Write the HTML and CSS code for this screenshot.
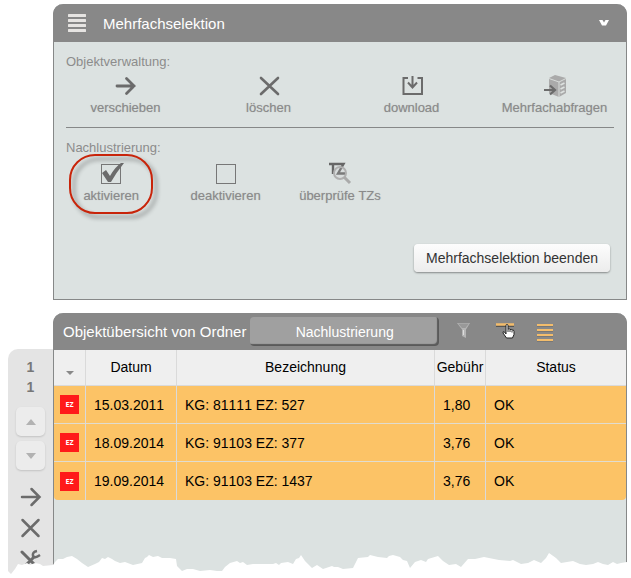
FILE: index.html
```html
<!DOCTYPE html>
<html lang="de">
<head>
<meta charset="utf-8">
<title>Mehrfachselektion</title>
<link rel="stylesheet" href="styles.css">
</head>
<body>
<main class="page">
  <section class="panel selection">
    <header class="panel-head">
      <svg class="menu-icon" width="18" height="20" viewBox="0 0 18 20" aria-hidden="true">
        <path d="M1 2.500H17M1 7.500H17M1 12.500H17M1 17.500H17" stroke="#e6e4e2" stroke-width="3" stroke-linecap="round"/>
      </svg>
      <h1 class="panel-title">Mehrfachselektion</h1>
      <button class="collapse" type="button" aria-label="Einklappen">
        <svg width="10" height="8" viewBox="0 0 10 8"><path d="M0 1H3.500L5 3.500L6.500 1H10L7 6.500H3Z" fill="#fff"/></svg>
      </button>
    </header>

    <h2 class="group-title">Objektverwaltung:</h2>
    <div class="actions actions-four">
      <button class="action" type="button">
        <svg width="24" height="24" viewBox="0 0 24 24"><path d="M4 12H21M13.500 4.500L21 12L13.500 19.500" fill="none" stroke="#6b6b6b" stroke-width="2.800" stroke-linecap="round"/></svg>
        <span>verschieben</span>
      </button>
      <button class="action" type="button">
        <svg width="24" height="24" viewBox="0 0 24 24"><path d="M4 4L21 20M21 4L4 20" stroke="#6b6b6b" stroke-width="2.600" stroke-linecap="round"/></svg>
        <span>löschen</span>
      </button>
      <button class="action" type="button">
        <svg width="24" height="24" viewBox="0 0 24 24"><path d="M8 4H3.500V20H22V4H17.500M12.500 2V13M8 8.500L12.500 13.500L17 8.500" fill="none" stroke="#6b6b6b" stroke-width="2"/></svg>
        <span>download</span>
      </button>
      <button class="action" type="button">
        <svg width="24" height="24" viewBox="0 0 24 24">
          <path d="M7 4L13 1L24 4V19L17 23L7 19Z" fill="#aaa"/>
          <path d="M7 4.500L17 8L24 4.500M17 8V23" fill="none" stroke="#d8dcda"/>
          <path d="M18.500 11L22.500 9M18.500 15L22.500 13M18.500 19L22.500 17" stroke="#dde2e0" stroke-width="1.600"/>
          <path d="M2 16H12M8 11.500L13 16L8 20.500" fill="none" stroke="#6b6b6b" stroke-width="2.200"/>
        </svg>
        <span>Mehrfachabfragen</span>
      </button>
    </div>

    <hr class="divider">

    <h2 class="group-title">Nachlustrierung:</h2>
    <div class="actions actions-five">
      <label class="action marked">
        <span class="tick">
          <input type="checkbox" checked>
          <svg class="tick-mark" width="24" height="24" viewBox="0 0 24 24" aria-hidden="true">
            <path d="M0 11L4 8L8 14Q13 5 19 1H22Q14 11 9 20H6Z" fill="#6b6b6b"/>
          </svg>
        </span>
        <span>aktivieren</span>
      </label>
      <label class="action">
        <span class="tick"><input type="checkbox"></span>
        <span>deaktivieren</span>
      </label>
      <button class="action" type="button">
        <svg width="24" height="24" viewBox="0 0 24 24">
          <path d="M1 2H9M5 2V12M9 2H15.500L10 11.500H17" fill="none" stroke="#666" stroke-width="2.400"/>
          <circle cx="12" cy="11" r="6" fill="#ccc" fill-opacity=".2" stroke="#b0b0b0" stroke-width="2"/>
          <path d="M16 15L22 21" stroke="#aaa" stroke-width="3"/>
        </svg>
        <span>überprüfe TZs</span>
      </button>
    </div>

    <footer class="panel-foot">
      <button class="finish" type="button">Mehrfachselektion beenden</button>
    </footer>
  </section>

  <div class="workspace">
    <aside class="rail">
      <span class="page-no">1</span>
      <span class="page-no">1</span>
      <button class="step" type="button" aria-label="Vorherige Seite"><svg width="10" height="6" viewBox="0 0 10 6"><path d="M0 6L5 0L10 6Z" fill="#b2b2b2"/></svg></button>
      <button class="step" type="button" aria-label="Nächste Seite"><svg width="10" height="6" viewBox="0 0 10 6"><path d="M0 0L5 6L10 0Z" fill="#b2b2b2"/></svg></button>
      <button class="tool tool-first" type="button" aria-label="Verschieben">
        <svg width="22" height="22" viewBox="0 0 22 22"><path d="M2 11H19M11.500 3L19.500 11L11.500 19" fill="none" stroke="#6b6b6b" stroke-width="2.500" stroke-linecap="round"/></svg>
      </button>
      <button class="tool" type="button" aria-label="Löschen">
        <svg width="22" height="22" viewBox="0 0 22 22"><path d="M2.500 3L18.500 19M18.500 3L2.500 19" stroke="#6b6b6b" stroke-width="2.500" stroke-linecap="round"/></svg>
      </button>
      <button class="tool" type="button" aria-label="Werkzeuge">
        <svg width="22" height="22" viewBox="0 0 22 22">
          <path d="M2 4L17 19M4 19L14 9" stroke="#6b6b6b" stroke-width="3" stroke-linecap="round"/>
          <path d="M17 3Q12 4 13 8Q14 11 20 7" fill="none" stroke="#6b6b6b" stroke-width="2.500"/>
        </svg>
      </button>
    </aside>

    <section class="panel overview">
      <header class="panel-head overview-head">
        <h2 class="panel-title">Objektübersicht von Ordner</h2>
        <button class="folder" type="button">Nachlustrierung</button>
        <button class="head-tool" type="button" aria-label="Filter">
          <svg width="22" height="22" viewBox="0 0 22 22"><path d="M4 2H17L13 8.500V17L9 15V8.500Z" fill="#b5b5b5"/><path d="M5 2.500H16L12.500 7H9Z" fill="#999"/><path d="M10.500 9V14" stroke="#ddd"/></svg>
        </button>
        <button class="head-tool" type="button" aria-label="Zeile auswählen">
          <svg width="22" height="22" viewBox="0 0 22 22">
            <path d="M2 5H20" stroke="#555" stroke-width="2"/>
            <path d="M2 3.500H20" stroke="#f3bd6c" stroke-width="2.500"/>
            <path d="M12 13V4.500Q12 3.500 13 3.500T14 4.500V8Q15.500 7.500 16 8.500Q17.500 8 18 9Q20 8.500 20 10.500V13.500L18.500 17H12.500L9 12Q8.500 10 10.500 11Z" fill="#fff" stroke="#222"/>
            <path d="M14 8V11M16 9V11M18 9.500V11.500" stroke="#333"/>
          </svg>
        </button>
        <button class="head-tool" type="button" aria-label="Alle Zeilen">
          <svg width="22" height="22" viewBox="0 0 22 22"><path d="M2 5.500H18M2 10.500H18M2 15.500H18M2 20.500H18" stroke="#777"/><path d="M2 4H18M2 9H18M2 14H18M2 19H18" stroke="#f3bd6c" stroke-width="2"/></svg>
        </button>
      </header>

      <table class="objects">
        <colgroup>
          <col class="col-type"><col class="col-date"><col class="col-name"><col class="col-fee"><col class="col-status">
        </colgroup>
        <thead>
          <tr>
            <th aria-label="Typ"><svg class="sort" width="8" height="4" viewBox="0 0 8 4"><path d="M0 0H8L4 4Z" fill="#888"/></svg></th>
            <th>Datum</th><th>Bezeichnung</th><th>Gebühr</th><th>Status</th>
          </tr>
        </thead>
        <tbody>
          <tr><td><span class="badge">EZ</span></td><td>15.03.2011</td><td>KG: 81111 EZ: 527</td><td>1,80</td><td>OK</td></tr>
          <tr><td><span class="badge">EZ</span></td><td>18.09.2014</td><td>KG: 91103 EZ: 377</td><td>3,76</td><td>OK</td></tr>
          <tr><td><span class="badge">EZ</span></td><td>19.09.2014</td><td>KG: 91103 EZ: 1437</td><td>3,76</td><td>OK</td></tr>
        </tbody>
      </table>
    </section>

    <svg class="torn" viewBox="0 0 631 28" preserveAspectRatio="none" aria-hidden="true">
      <path fill="#fff" d="M0 28V18H8L8 20L11 23L15 18L18 13L22 14L27 12L30 14L35 12L40 13L43 15L53 14L55 11L58 8L63 8L67 6L72 5L77 8L82 12L88 16L95 13L99 11L102 7L105 8L108 6L112 8L115 10L120 12L125 11L133 14L142 12L145 7L147 6L149 4L153 6L158 5L162 7L170 7L176 8L177 15L182 20L187 18L193 18L200 20L210 19L217 20L222 20L225 16L230 12L237 10L240 12L243 11L247 14L253 13L273 13L276 12L279 14L281 12L288 11L293 13L296 8L299 7L301 4L305 10L312 17L317 14L323 18L332 15L334 16L338 16L343 18L353 17L355 13L358 7L368 6L370 4L378 6L387 7L389 5L393 4L400 6L403 9L407 10L410 17L415 11L421 9L426 11L428 8L438 5L443 10L449 14L456 13L461 16L468 8L475 8L484 6L499 9L510 10L513 9L521 13L528 12L534 9L541 12L546 7L549 2L556 7L561 12L573 10L580 13L586 14L593 13L598 11L603 13L608 14L613 11L617 13L621 12L627 11H631V28Z"/>
    </svg>
  </div>
</main>
</body>
</html>
```

FILE: styles.css
```css
* {
  box-sizing: border-box;
}

body {
  margin: 0;
  background: #fff;
  color: #000;
  font-family: "Liberation Sans", Arial, sans-serif;
  font-size: 14px;
  font-kerning: none;
}

button {
  margin: 0;
  padding: 0;
  border: 0;
  background: none;
  color: inherit;
  font: inherit;
  font-kerning: none;
  cursor: pointer;
}

svg {
  display: block;
  flex: none;
}

.page {
  display: flex;
  flex-direction: column;
  gap: 13px;
  padding-top: 4px;
}

.panel {
  border: 1px solid #868888;
  border-top: 0;
  border-radius: 10px 10px 0 0;
  background: #dce2e1;
}

.selection {
  margin: 0 4px 0 53px;
}

.panel-head {
  display: flex;
  align-items: center;
  height: 38px;
  margin: 0 -1px;
  padding: 0 18px 0 15px;
  border-radius: 10px 10px 0 0;
  background: #888;
  color: #fff;
}

.panel-title {
  margin: 0;
  font-size: 15px;
  font-weight: normal;
  white-space: nowrap;
}

.menu-icon {
  margin-right: 17px;
}

.collapse {
  margin-left: auto;
}

.group-title {
  margin: 10px 12px 0;
  color: #8c8c8c;
  font-size: 13px;
  font-weight: normal;
  line-height: 20px;
}

.actions {
  display: grid;
  justify-items: center;
  margin-top: 2px;
  color: #8a8a8a;
  font-size: 13px;
  line-height: 20px;
}

.actions-four {
  grid-template-columns: repeat(4, 1fr);
}

.actions-five {
  grid-template-columns: repeat(5, 1fr);
  margin-top: 4px;
}

.action {
  position: relative;
  display: flex;
  flex-direction: column;
  align-items: center;
  text-shadow: 0 0 1px #b4b6b6;
  white-space: nowrap;
  cursor: pointer;
}

.divider {
  height: 1px;
  margin: 9px 12px 0;
  border: 0;
  background: #868888;
}

.tick {
  position: relative;
  display: grid;
  place-items: center;
  width: 24px;
  height: 24px;
}

.tick input {
  width: 20px;
  height: 20px;
  margin: 0;
  border: 1px solid #777;
  appearance: none;
}

.tick-mark {
  position: absolute;
  top: 0;
  left: 3px;
}

/* Highlight ring around the active option */
.marked::after {
  content: "";
  position: absolute;
  inset: -8px -14px;
  border: 2px solid #c8240a;
  border-radius: 26px;
  filter: drop-shadow(4px 4px 2px rgba(0, 0, 0, 0.4));
  pointer-events: none;
}

.panel-foot {
  display: flex;
  justify-content: flex-end;
  padding: 38px 16px 27px;
}

.finish {
  height: 28px;
  padding: 0 12px;
  border-radius: 4px;
  background: linear-gradient(#fdfdfd, #ececec);
  box-shadow: 0 1px 2px rgba(0, 0, 0, 0.4);
  color: #333;
}

.workspace {
  position: relative;
  display: grid;
  grid-template-columns: 45px 1fr;
  padding: 0 4px 0 8px;
}

.rail {
  display: flex;
  flex-direction: column;
  align-items: center;
  margin-top: 36px;
  padding-top: 8px;
  border-radius: 10px 0 0 0;
  background: #e4e4e4;
}

.page-no {
  color: #777;
  font-weight: bold;
  line-height: 20px;
}

.step {
  display: grid;
  place-items: center;
  width: 29px;
  height: 29px;
  margin-top: 10px;
  border-radius: 5px;
  background: #ececec;
  box-shadow: 0 1px 2px rgba(0, 0, 0, 0.15);
}

.step + .step {
  margin-top: 5px;
}

.tool {
  margin-bottom: 9px;
}

.tool-first {
  margin-top: 16px;
}

.overview {
  min-height: 265px;
}

.overview-head {
  height: 37px;
  padding: 0 70px 0 10px;
}

.folder {
  flex: 1;
  height: 29px;
  margin: 0 14px 0 4px;
  border-radius: 4px;
  background: #a0a0a0;
  box-shadow: inset -2px -2px 1px #5a5a5a;
}

.head-tool + .head-tool {
  margin-left: 19px;
}

.objects {
  width: 100%;
  border-collapse: separate;
  border-spacing: 0;
  table-layout: fixed;
}

.col-type {
  width: 32px;
}

.col-date {
  width: 91px;
}

.col-name {
  width: 258px;
}

.col-fee {
  width: 51px;
}

.objects th {
  height: 36px;
  padding: 0 0 2px;
  border-right: 1px solid #dadada;
  border-bottom: 1px solid #dadada;
  background: #efefef;
  font-weight: normal;
}

.objects td {
  height: 38px;
  padding: 0 8px;
  border-right: 1px solid #dadada;
  border-bottom: 1px solid #e0dcd0;
  background: #fcc366;
}

.objects th:last-child,
.objects td:last-child {
  border-right: 0;
}

.objects tr:last-child td {
  border-bottom: 0;
}

.objects th:first-child {
  padding-top: 12px;
}

.objects td:first-child {
  padding: 0 0 0 6px;
}

.objects tr:last-child td:first-child {
  border-bottom-left-radius: 4px;
}

.objects tr:last-child td:last-child {
  border-bottom-right-radius: 4px;
}

.sort {
  margin: 0 auto;
}

.badge {
  display: block;
  width: 19px;
  height: 19px;
  background: #ff1a1a;
  color: #fff;
  font-family: "Open Sans", sans-serif;
  font-size: 7px;
  font-weight: bold;
  line-height: 19px;
  text-align: center;
}

.torn {
  position: absolute;
  bottom: 0;
  left: 0;
  width: 100%;
  height: 28px;
}
```
